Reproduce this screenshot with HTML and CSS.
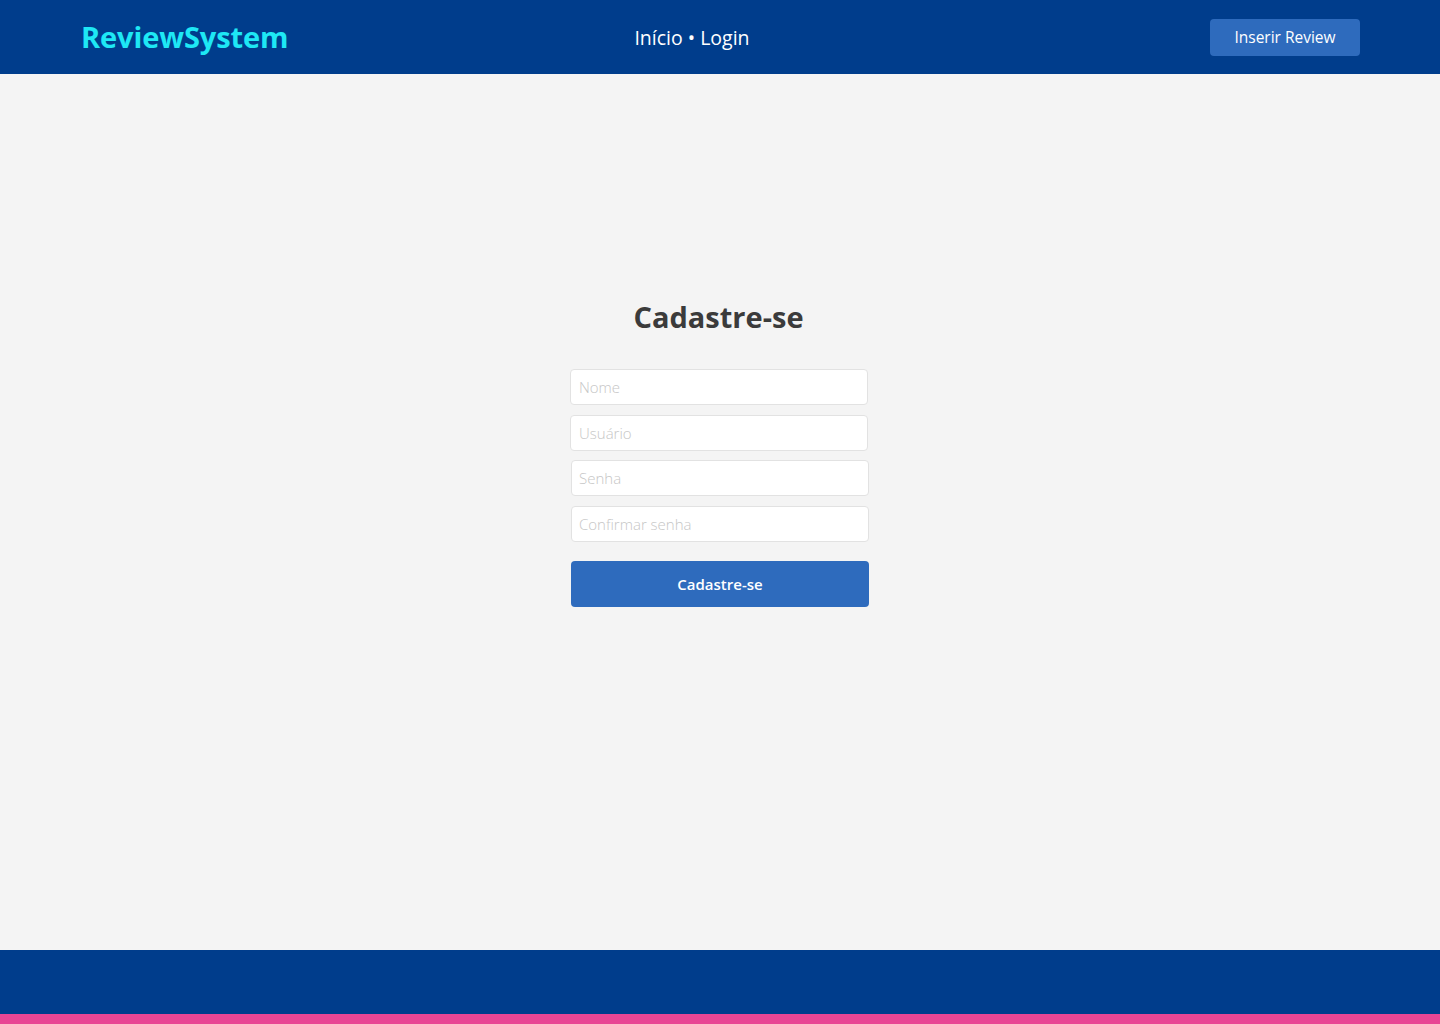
FILE: index.html
```html
<!DOCTYPE html>
<html lang="pt-BR">
<head>
<meta charset="utf-8">
<title>ReviewSystem - Cadastre-se</title>
<link rel="stylesheet" href="styles.css">
</head>
<body>
<header class="topbar">
  <div class="brand">ReviewSystem</div>
  <nav class="nav">Início • Login</nav>
  <button class="btn-top">Inserir Review</button>
</header>
<main class="main">
  <h1 class="title">Cadastre-se</h1>
  <form class="form">
    <input class="field" type="text" placeholder="Nome">
    <input class="field" type="text" placeholder="Usuário">
    <input class="field shift" type="password" placeholder="Senha">
    <input class="field shift" type="password" placeholder="Confirmar senha">
    <button class="btn-submit shift" type="button">Cadastre-se</button>
  </form>
</main>
<footer class="footer"></footer>
</body>
</html>
```
FILE: styles.css
```css
* { box-sizing: border-box; }
html, body { margin: 0; padding: 0; }
body {
  font-family: "Open Sans", "Noto Sans", sans-serif;
  background: #f4f4f4;
  min-height: 1024px;
  display: flex;
  flex-direction: column;
}
.topbar {
  height: 74px;
  background: #003d8c;
  display: flex;
  align-items: center;
  justify-content: space-between;
  padding: 0 80px 0 81px;
  position: relative;
}
.brand {
  color: #1ee8f5;
  font-weight: 700;
  font-size: 29px;
  letter-spacing: -0.1px;
  margin-top: -2px;
}
.nav {
  position: absolute;
  left: 0; right: 0;
  text-align: center;
  color: #ffffff;
  font-size: 19.5px;
  margin-left: -56px;
  margin-top: 0;
  pointer-events: none;
}
.btn-top {
  width: 150px;
  height: 37px;
  margin-top: 1px;
  padding: 0 0 1px;
  background: #2e6bbd;
  color: #fff;
  border: none;
  border-radius: 4px;
  font-family: inherit;
  font-size: 15.5px;
}
.main {
  flex: 1;
  display: flex;
  flex-direction: column;
  align-items: center;
  padding-top: 223px;
}
.title {
  margin: 0 0 32px;
  font-size: 29px;
  line-height: 40px;
  font-weight: 700;
  color: #3b3b3b;
  margin-left: -3px;
}
.form {
  width: 300px;
  display: flex;
  flex-direction: column;
}
.field {
  width: 298px;
  height: 36px;
  border: 1px solid #e2e2e2;
  border-radius: 4px;
  background: #fff;
  padding: 0 8px;
  font-family: inherit;
  font-size: 15px;
  margin-bottom: 10px;
  color: #333;
}
.field::placeholder { color: #c6c6c6; font-weight: 300; }
.field:nth-child(2) { margin-bottom: 9px; }
.shift { margin-left: 1px; padding-left: 7px; }
.field:nth-child(4) { margin-bottom: 19px; }
.btn-submit {
  width: 298px;
  height: 46px;
  background: #2e6bbd;
  color: #fff;
  border: none;
  border-radius: 4px;
  font-family: inherit;
  font-size: 15px;
  font-weight: 600;
  padding: 0;
}
.footer {
  height: 74px;
  background: #003d8c;
  border-bottom: 10px solid #e84694;
}
```
